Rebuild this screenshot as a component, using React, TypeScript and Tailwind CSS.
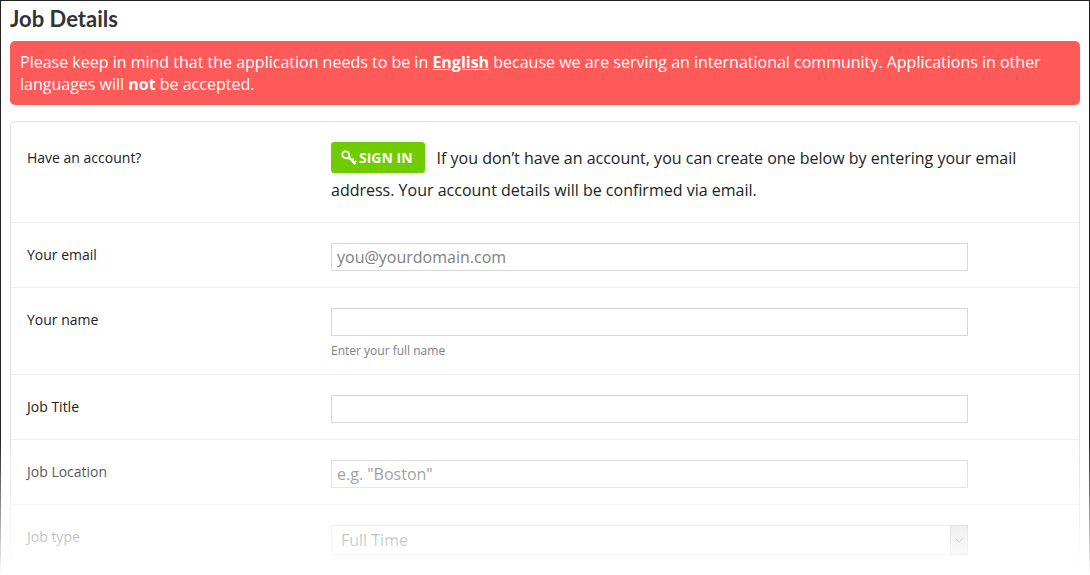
import type { ReactNode } from "react";

function KeyIcon() {
  return (
    <svg viewBox="0 0 16 16" className="h-4 w-4" fill="none" stroke="currentColor" aria-hidden="true">
      <path
        d="M2.100 2.400C3.400 1.100 5.700 1.100 7.100 2.300 8.500 3.600 8.300 5.600 8.600 8.200 6.200 8.200 3.900 8.600 2.400 7.200 1 5.900.9 3.700 2.100 2.400Z"
        strokeWidth="1.900"
      />
      <path d="M8.200 7.800 14.400 14.200" strokeWidth="2.200" />
      <path d="M10.900 10.300 12.700 8.500M13.300 12.700 15.200 10.800" strokeWidth="1.900" />
    </svg>
  );
}

type RowProps = { label: string; htmlFor?: string; children: ReactNode };

function Row({ label, htmlFor, children }: RowProps) {
  return (
    <div className="flex border-t border-[#eeeeee] px-4 pt-5 pb-4 first:border-t-0">
      <div className="w-[304px] shrink-0 pt-0.5 text-[14px] leading-5">
        {htmlFor ? <label htmlFor={htmlFor}>{label}</label> : <p className="pt-1">{label}</p>}
      </div>
      <div className="min-w-0 flex-1">{children}</div>
    </div>
  );
}

type FieldProps = { id: string; type?: string; placeholder?: string };

function Field({ id, type = "text", placeholder }: FieldProps) {
  return (
    <input
      id={id}
      type={type}
      placeholder={placeholder}
      className="block h-7 w-[87%] border border-[#d8d8d8] bg-white px-[5px] text-[16px] text-[#333333] placeholder:text-[#808080]"
    />
  );
}

export default function App() {
  return (
    <div className="relative min-h-screen border-x border-t border-[#222222] bg-white px-[9px] pt-1 font-['Open_Sans','Noto_Sans',sans-serif] text-[#222222]">
      <h1 className="font-['Lato',sans-serif] text-[22px] leading-7 font-bold text-[#333333]">Job Details</h1>
      <div className="mt-2 rounded-[5px] bg-[#ff5a5a] p-[10px] text-[16px] leading-[22px] text-white">
        Please keep in mind that the application needs to be in <strong className="underline">English</strong> because
        we are serving an international community. Applications in other languages will <strong>not</strong> be
        accepted.
      </div>
      <form className="mt-4 rounded-[5px] border border-[#e2e2e2]">
        <Row label="Have an account?">
          <p className="text-[16px] leading-8">
            <a
              href="#sign-in"
              className="mr-3 inline-flex h-[31px] items-center gap-0.5 rounded-[3px] bg-[#70cc00] pr-3 pl-[10px] align-top text-[14px] font-bold text-white"
            >
              <KeyIcon />
              SIGN IN
            </a>
            If you don’t have an account, you can create one below by entering your email address. Your account details
            will be confirmed via email.
          </p>
        </Row>
        <Row label="Your email" htmlFor="email">
          <Field id="email" type="email" placeholder="you@yourdomain.com" />
        </Row>
        <Row label="Your name" htmlFor="name">
          <Field id="name" />
          <p className="mt-2 text-[12px] leading-[14px] text-[#808080]">Enter your full name</p>
        </Row>
        <Row label="Job Title" htmlFor="title">
          <Field id="title" />
        </Row>
        <Row label="Job Location" htmlFor="location">
          <Field id="location" placeholder={'e.g. "Boston"'} />
        </Row>
        <Row label="Job type" htmlFor="type">
          <div className="relative w-[87%]">
            <select
              id="type"
              className="block h-[30px] w-full appearance-none border border-[#cccccc] bg-white px-[9px] text-[16px] text-[#333333]"
            >
              <option>Full Time</option>
            </select>
            <span className="pointer-events-none absolute inset-y-0 right-0 flex w-[18px] items-center justify-center border border-[#b5b5b5] bg-[#d5d5d5]">
              <svg viewBox="0 0 8 5" className="h-[5px] w-2" fill="none" stroke="#444444" aria-hidden="true">
                <path d="M.5.5 4 4 7.500.5" />
              </svg>
            </span>
          </div>
        </Row>
      </form>
      <div className="pointer-events-none absolute -inset-x-px bottom-0 h-[135px] bg-linear-to-b from-transparent to-white" />
    </div>
  );
}
